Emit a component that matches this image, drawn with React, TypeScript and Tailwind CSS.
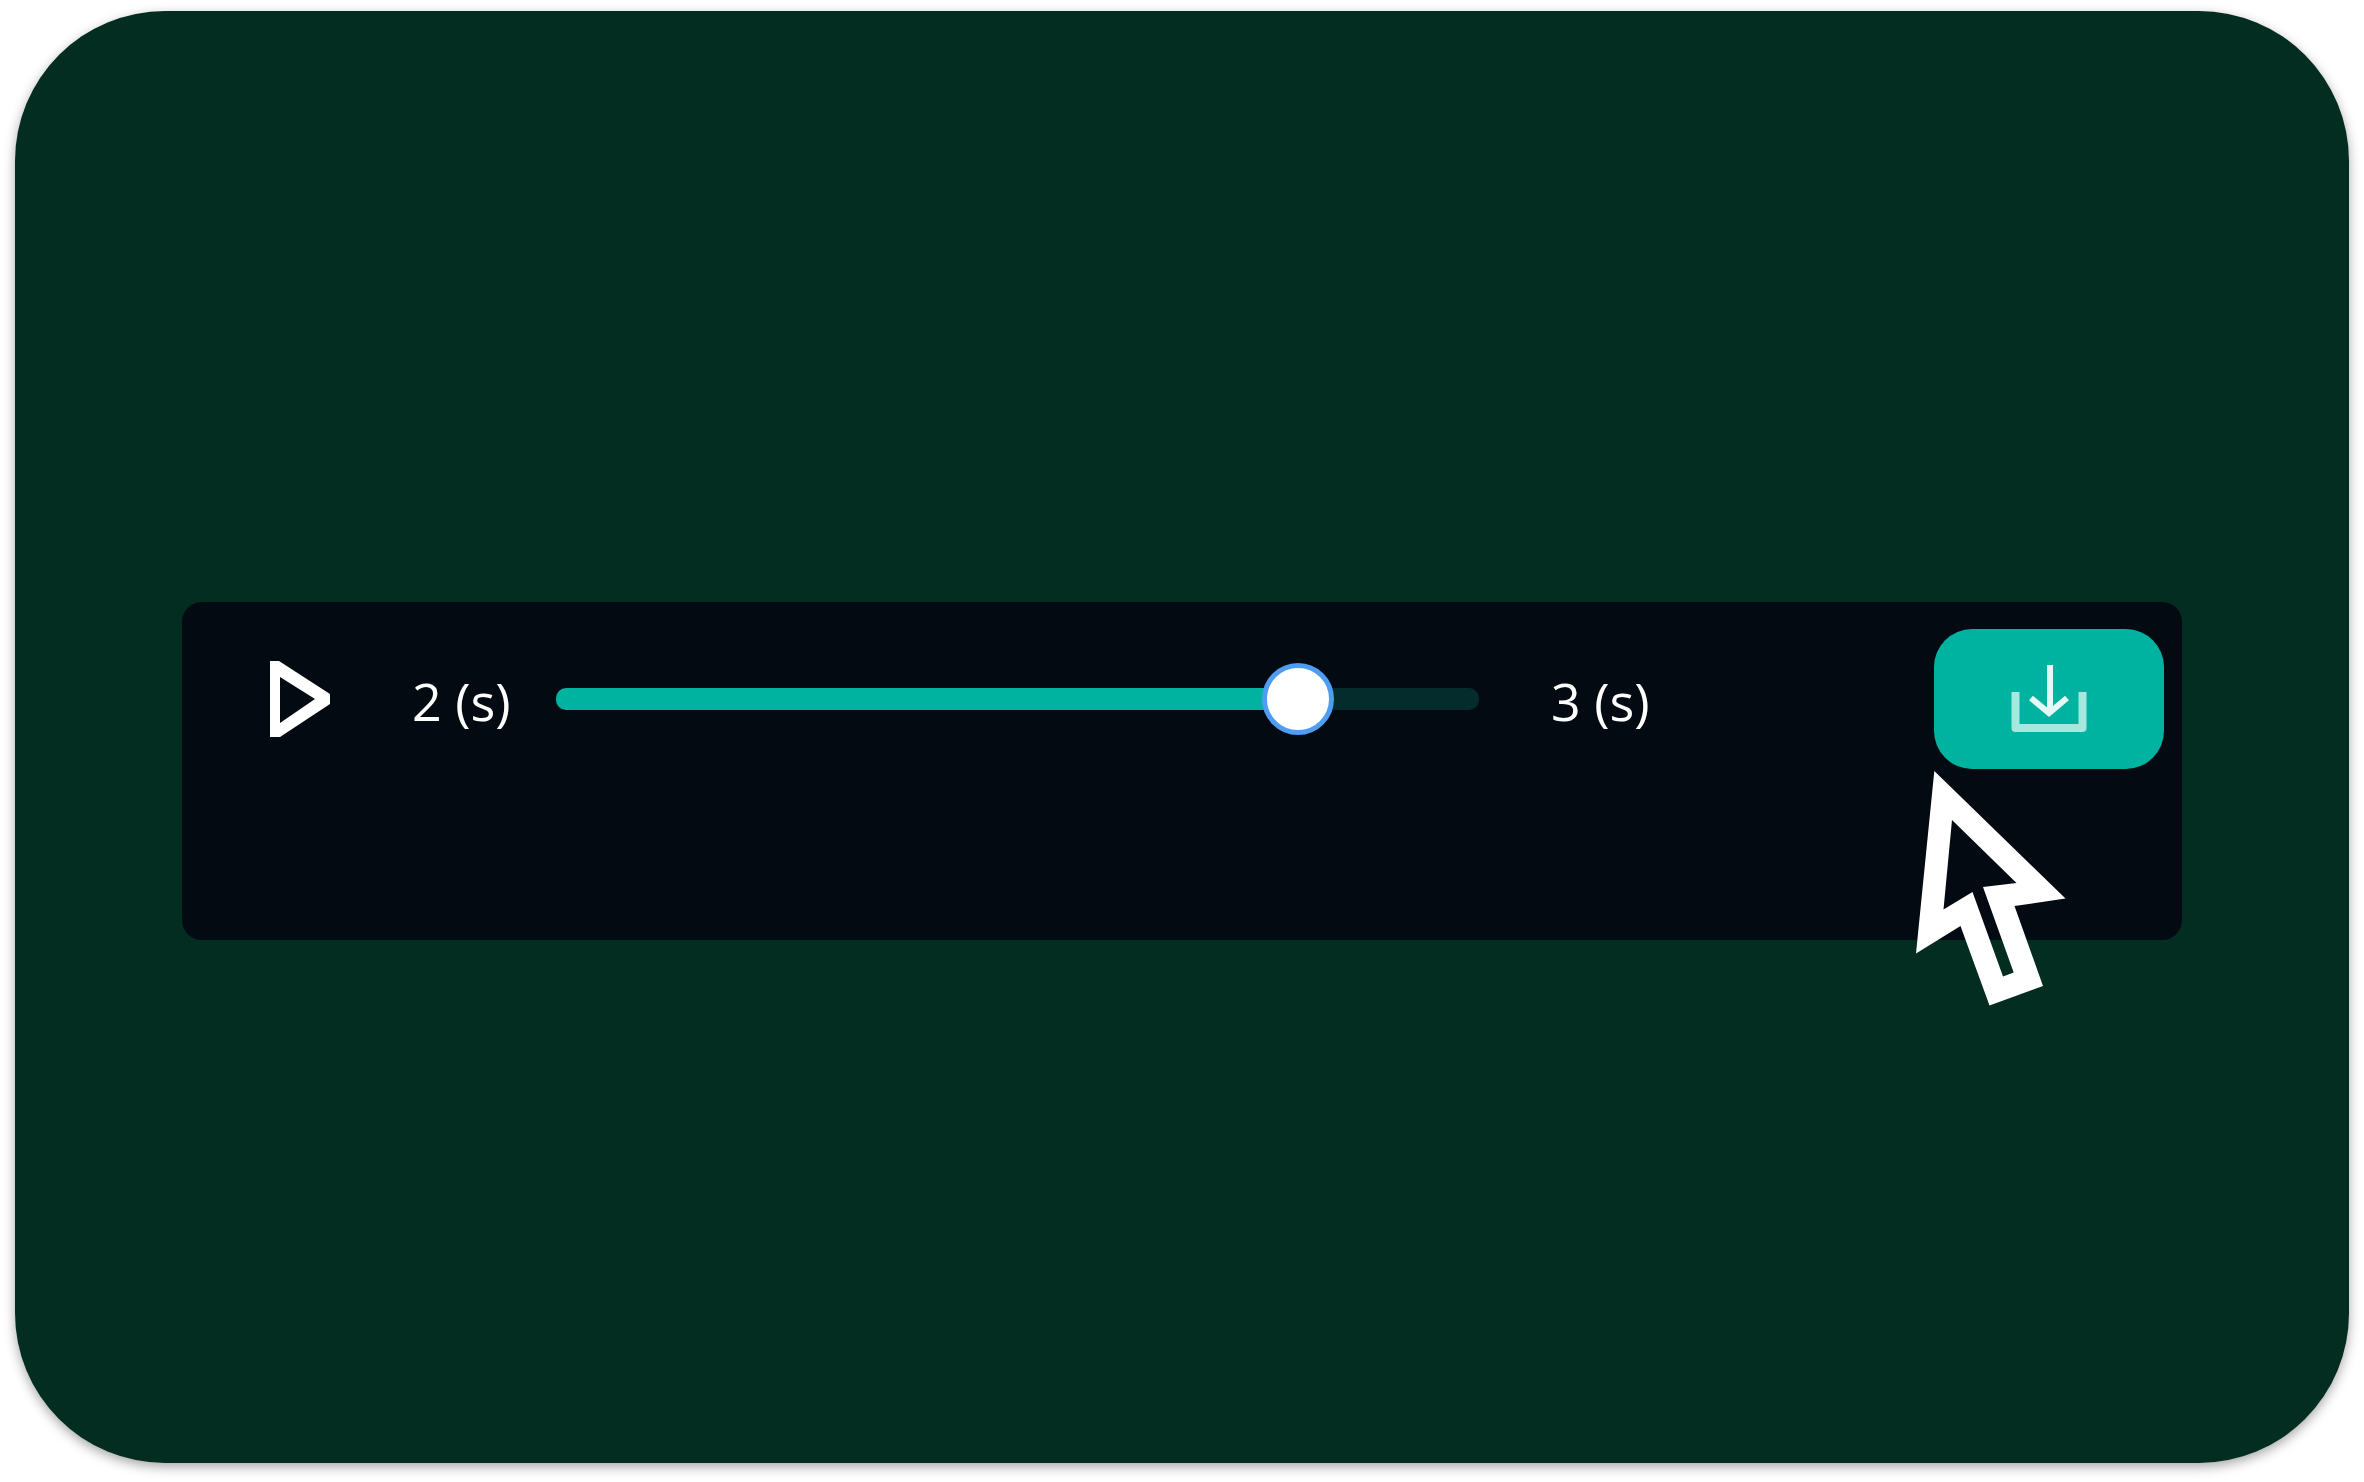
import { useState } from "react"

const DURATION = 3

function PlayIcon() {
  return (
    <svg viewBox="0 0 64 78" className="block h-[78px] w-16" aria-hidden="true">
      <path fill="white" fillRule="evenodd" d="M2 1H11L62 34V44L12 77H2ZM12 17V63L47 39Z" />
    </svg>
  )
}

function DownloadIcon() {
  return (
    <svg viewBox="0 0 76 70" className="block h-[70px] w-[76px]" fill="none" aria-hidden="true">
      <path d="M4.500 28V64H71.500V28" stroke="#a6e7de" strokeWidth="8" strokeLinejoin="round" />
      <path d="M39 1V50" stroke="#e6f9f6" strokeWidth="6" />
      <path d="M20 34L38 49L56 34" stroke="#e6f9f6" strokeWidth="6" />
    </svg>
  )
}

function PointerIcon() {
  return (
    <svg
      viewBox="0 0 160 245"
      className="pointer-events-none absolute top-[163px] right-[112px] h-[245px] w-40"
      aria-hidden="true"
    >
      <path
        fill="white"
        fillRule="evenodd"
        d="M24.300 6L155.500 133.600L104.500 141L133 221L79.500 240.500L50.500 161L6 188.500ZM42 55L106.500 118L73 122L103.700 207.500L93 211.500L62.500 127L33.500 144.500Z"
      />
    </svg>
  )
}

function AudioPlayer() {
  const [time, setTime] = useState(2.49)
  const progress = (time / DURATION) * 100

  return (
    <section
      aria-label="Audio player"
      className="relative rounded-[20px] bg-[#040a11] pt-[27px] pr-[18px] pb-[171px] pl-[86px]"
    >
      <div className="flex items-center">
        <button type="button" aria-label="Play" className="shrink-0">
          <PlayIcon />
        </button>
        <span className="ml-20 w-36 shrink-0 pt-1 whitespace-nowrap">{Math.floor(time)} (s)</span>
        <input
          type="range"
          aria-label="Playback position"
          min={0}
          max={DURATION}
          step={0.01}
          value={time}
          onChange={(e) => setTime(Number(e.target.value))}
          style={{
            background: `linear-gradient(to right, #00b2a0 ${progress}%, #052c2d ${progress}%)`,
          }}
          className="h-[22px] min-w-0 flex-1 cursor-pointer appearance-none rounded-[10px] [&::-webkit-slider-thumb]:h-[72px] [&::-webkit-slider-thumb]:w-[72px] [&::-webkit-slider-thumb]:appearance-none [&::-webkit-slider-thumb]:rounded-full [&::-webkit-slider-thumb]:border-5 [&::-webkit-slider-thumb]:border-[#4e9df3] [&::-webkit-slider-thumb]:bg-white"
        />
        <span className="ml-[72px] w-[383px] shrink-0 pt-1 whitespace-nowrap">{DURATION} (s)</span>
        <button
          type="button"
          aria-label="Download"
          className="flex h-[140px] w-[230px] shrink-0 items-center justify-center rounded-[38px] bg-[#00b2a0]"
        >
          <DownloadIcon />
        </button>
      </div>
      <PointerIcon />
    </section>
  )
}

export default function App() {
  return (
    <main className="flex min-h-screen flex-col bg-white px-[15px] pt-[11px] pb-[19px] font-['Open_Sans',sans-serif] text-[52px] leading-none font-medium text-white">
      <div className="flex flex-1 flex-col justify-center rounded-[150px] bg-[#032d20] px-[167px] pt-[68px] shadow-[0_4px_12px_rgba(0,0,0,0.35)]">
        <AudioPlayer />
      </div>
    </main>
  )
}
